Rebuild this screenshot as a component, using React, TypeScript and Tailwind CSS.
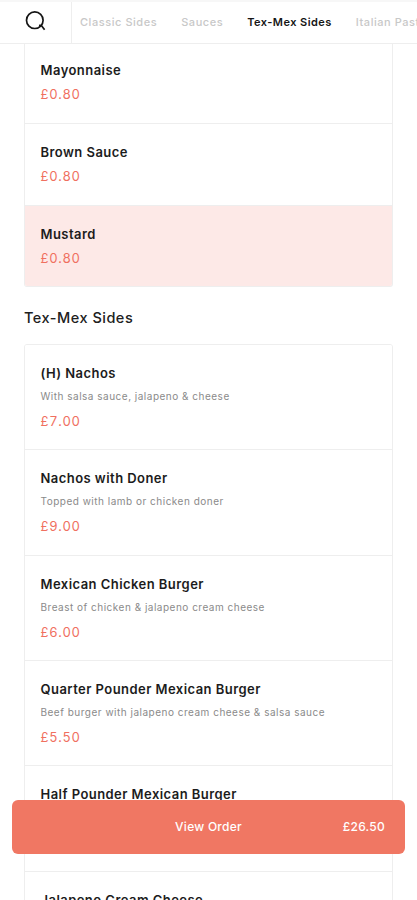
import React from "react";

type Item = { name: string; desc?: string; price: string; active?: boolean };

const sauces: Item[] = [
  { name: "Mayonnaise", price: "£0.80" },
  { name: "Brown Sauce", price: "£0.80" },
  { name: "Mustard", price: "£0.80", active: true },
];

const sides: Item[] = [
  { name: "(H) Nachos", desc: "With salsa sauce, jalapeno & cheese", price: "£7.00" },
  { name: "Nachos with Doner", desc: "Topped with lamb or chicken doner", price: "£9.00" },
  { name: "Mexican Chicken Burger", desc: "Breast of chicken & jalapeno cream cheese", price: "£6.00" },
  { name: "Quarter Pounder Mexican Burger", desc: "Beef burger with jalapeno cream cheese & salsa sauce", price: "£5.50" },
  { name: "Half Pounder Mexican Burger", desc: "Beef burger with jalapeno cream cheese & salsa sauce", price: "£6.50" },
  { name: "Jalapeno Cream Cheese", desc: "6 pieces", price: "£4.50" },
];

function Row({ item }: { item: Item }) {
  const size = item.desc ? "h-[105.4px]" : "h-[82px] last:h-[80px]";
  const tone = item.active ? "bg-[#fde9e7]" : "bg-white";
  return (
    <li className={`${size} ${tone} border-b border-[#eeeeee] px-[15.5px] pt-[18px] last:border-b-0`}>
      <h3 className="text-[13px] leading-5 font-semibold tracking-[0.45px] text-[#1c1c1c]">{item.name}</h3>
      {item.desc && (
        <p className="mt-[5px] text-[10px] leading-4 tracking-[0.5px] text-[#8a8a8a]">{item.desc}</p>
      )}
      <p
        className={`${item.desc ? "mt-[7px]" : "mt-1"} text-[13px] leading-5 tracking-[0.7px] text-[#f0705f] tabular-nums`}
      >
        {item.price}
      </p>
    </li>
  );
}

export default function App() {
  return (
    <div className="relative flex h-[900px] w-[417px] flex-col overflow-hidden bg-white font-['Inter',sans-serif]">
      <header className="relative z-10 flex h-11 shrink-0 border-t-2 border-b border-t-[#f7f7f7] border-b-[#eeeeee] bg-white">
        <div className="flex w-[72px] shrink-0 justify-center border-r border-[#eeeeee] pt-2">
          <svg width="21" height="21" viewBox="0 0 21 21" fill="none" stroke="#151515" strokeWidth="1.7">
            <circle cx="9.8" cy="10.2" r="8.3" />
            <path d="M14 15.4 L16.4 15.6 L19.6 19.8" />
          </svg>
        </div>
        <nav className="flex flex-1 gap-6 overflow-hidden pt-3 pl-2 text-[11px] leading-4 font-medium tracking-[0.55px] whitespace-nowrap text-[#c8c8c8]">
          <span>Classic Sides</span>
          <span>Sauces</span>
          <span className="font-semibold tracking-[0.45px] text-[#151515]">Tex-Mex Sides</span>
          <span>Italian Pasta</span>
        </nav>
      </header>

      <main className="-mt-[2px] shrink-0 px-6">
        <ul className="overflow-hidden rounded-b-[3px] border border-t-0 border-[#eeeeee]">
          {sauces.map((item) => (
            <Row key={item.name} item={item} />
          ))}
        </ul>
        <h2 className="mt-[19px] text-[14.5px] leading-6 font-medium tracking-[0.5px] text-[#202020]">Tex-Mex Sides</h2>
        <ul className="mt-[13.9px] overflow-hidden rounded-[3px] border border-[#eeeeee]">
          {sides.map((item) => (
            <Row key={item.name} item={item} />
          ))}
        </ul>
      </main>

      <button className="absolute top-[799.5px] left-3 grid h-[54px] w-[393px] grid-cols-3 items-center rounded-[6px] bg-[#f07763] px-5 text-[12px] font-medium tracking-[0.25px] text-white">
        <span className="col-start-2 text-center">View Order</span>
        <span className="text-right">£26.50</span>
      </button>
    </div>
  );
}
